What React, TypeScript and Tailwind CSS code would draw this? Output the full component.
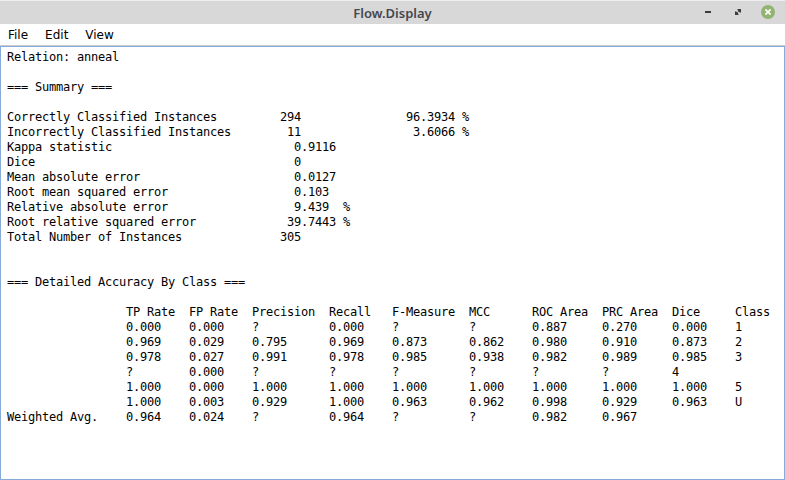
import React from "react";

type Cell = [column: number, text: string];

// Places each text at its character column in a monospaced line.
const line = (...cells: Cell[]) =>
  cells.reduce((out, [column, text]) => out.padEnd(column) + text, "");

const classColumns = [17, 26, 35, 46, 55, 66, 75, 85, 95, 104];

const classRow = (label: string, values: string[]) =>
  line([0, label], ...values.map((value, i): Cell => [classColumns[i], value]));

const output = [
  "Relation: anneal",
  "",
  "=== Summary ===",
  "",
  line([0, "Correctly Classified Instances"], [39, "294"], [57, "96.3934 %"]),
  line([0, "Incorrectly Classified Instances"], [40, "11"], [58, "3.6066 %"]),
  line([0, "Kappa statistic"], [41, "0.9116"]),
  line([0, "Dice"], [41, "0"]),
  line([0, "Mean absolute error"], [41, "0.0127"]),
  line([0, "Root mean squared error"], [41, "0.103"]),
  line([0, "Relative absolute error"], [41, "9.439"], [48, "%"]),
  line([0, "Root relative squared error"], [40, "39.7443 %"]),
  line([0, "Total Number of Instances"], [39, "305"]),
  "",
  "",
  "=== Detailed Accuracy By Class ===",
  "",
  classRow("", ["TP Rate", "FP Rate", "Precision", "Recall", "F-Measure", "MCC", "ROC Area", "PRC Area", "Dice", "Class"]),
  classRow("", ["0.000", "0.000", "?", "0.000", "?", "?", "0.887", "0.270", "0.000", "1"]),
  classRow("", ["0.969", "0.029", "0.795", "0.969", "0.873", "0.862", "0.980", "0.910", "0.873", "2"]),
  classRow("", ["0.978", "0.027", "0.991", "0.978", "0.985", "0.938", "0.982", "0.989", "0.985", "3"]),
  classRow("", ["?", "0.000", "?", "?", "?", "?", "?", "?", "4"]),
  classRow("", ["1.000", "0.000", "1.000", "1.000", "1.000", "1.000", "1.000", "1.000", "1.000", "5"]),
  classRow("", ["1.000", "0.003", "0.929", "1.000", "0.963", "0.962", "0.998", "0.929", "0.963", "U"]),
  classRow("Weighted Avg.", ["0.964", "0.024", "?", "0.964", "?", "?", "0.982", "0.967"]),
];

function TitleBar() {
  return (
    <header className="grid h-6 shrink-0 grid-cols-[1fr_auto_1fr] items-start border-t border-[#efefef] bg-[#d8d8d8] px-[10px]">
      <span />
      <h1 className="font-['Noto_Sans',sans-serif] text-[13px] leading-6 font-semibold text-[#45474d]">
        Flow.Display
      </h1>
      <div className="flex items-center justify-end gap-4 pt-1">
        <button aria-label="Minimize" className="flex size-3.5 items-center justify-center">
          <span className="h-0.5 w-1.5 bg-[#3c3c3c]" />
        </button>
        <button aria-label="Maximize" className="flex size-3.5 items-center justify-center">
          <svg viewBox="0 0 6 6" className="size-1.5" fill="#3c3c3c">
            <path d="M2 0H6v4L4.9 2.9 4.2 3.4 2.6 1.8 3.1 1.1zM0 2l1.1 1.1.7-.5 1.6 1.6-.5.7L4 6H0z" />
          </svg>
        </button>
        <button aria-label="Close" className="flex size-3.5 items-center justify-center rounded-full bg-[#92b372]">
          <svg viewBox="0 0 6 6" className="size-1.5" stroke="#fff" strokeWidth="1.7">
            <path d="M.4.4l5.2 5.2M5.6.4L.4 5.6" />
          </svg>
        </button>
      </div>
    </header>
  );
}

export default function App() {
  return (
    <div className="flex h-[480px] w-[785px] flex-col overflow-hidden bg-white">
      <TitleBar />
      <nav className="flex h-[22px] shrink-0 items-center gap-[17px] border-b border-[#cccccc] pl-2 font-['DejaVu_Sans',sans-serif] text-[12px] leading-5 text-black">
        <span>File</span>
        <span>Edit</span>
        <span>View</span>
      </nav>
      <main className="min-h-0 flex-1 border border-[#86abd9] pt-[3px] pl-1.5">
        <pre className="font-['DejaVu_Sans_Mono',monospace] text-[12px] leading-[15px] tracking-[-0.2246px] text-black">
          {output.join("\n")}
        </pre>
      </main>
    </div>
  );
}
